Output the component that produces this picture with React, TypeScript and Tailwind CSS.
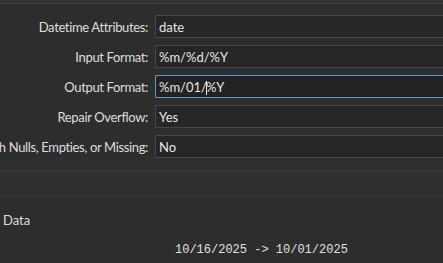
import React from "react";

const rows = [
  { label: "Datetime Attributes:", value: "date" },
  { label: "Input Format:", value: "%m/%d/%Y" },
  { label: "Output Format:", value: "%m/01/%Y", focused: true },
  { label: "Repair Overflow:", value: "Yes" },
  { label: "Replace with Nulls, Empties, or Missing:", value: "No" },
];

export default function App() {
  return (
    <div
      className="w-[443px] h-[263px] overflow-hidden bg-[#2d2d2d] text-[#dedede]"
      style={{ fontFamily: 'Lato, "Noto Sans", sans-serif' }}
    >
      <div className="h-[3px] bg-[#313131]" />
      <div className="h-px bg-[#404040]" />
      <div className="flex flex-col gap-[7px] pt-[11px]">
        {rows.map((r) => (
          <div key={r.label} className="flex items-center h-[23px]">
            <div className="w-[148px] shrink-0 flex justify-end">
              <span className="shrink-0 whitespace-nowrap text-[13px] tracking-[-0.35px] leading-[18px]">
                {r.label}
              </span>
            </div>
            <div
              className={
                r.focused
                  ? "ml-[7px] flex-1 h-full flex items-center pl-[3px] bg-[#222222] border border-[#5b9bd5] rounded-l-[2px] border-r-0"
                  : "ml-[7px] flex-1 h-full flex items-center pl-[3px] bg-[#262626] border border-[#474747] rounded-l-[2px] border-r-0"
              }
            >
              <span className="text-[13px] leading-[18px] text-[#e6e6e6]">
                {r.focused ? (
                  <>
                    %m/01/
                    <span className="inline-block w-px h-[14px] bg-[#e6e6e6] align-middle -mx-px" />
                    %Y
                  </>
                ) : (
                  r.value
                )}
              </span>
            </div>
          </div>
        ))}
      </div>
      <div className="h-[12px] bg-[#2f2f2f]" />
      <div className="h-px bg-[#3b3b3b]" />
      <div className="h-[25px] bg-[#303030]" />
      <div className="h-px bg-[#383838]" />
      <div className="pl-[3px] pt-[14px] text-[13px] leading-[18px]">Data</div>
      <div
        className="pl-[175px] pt-[13px] text-[12px] leading-[16px] text-[#e0e0e0] whitespace-pre"
        style={{ fontFamily: '"Liberation Mono", monospace' }}
      >
        10/16/2025 -&gt; 10/01/2025
      </div>
    </div>
  );
}
